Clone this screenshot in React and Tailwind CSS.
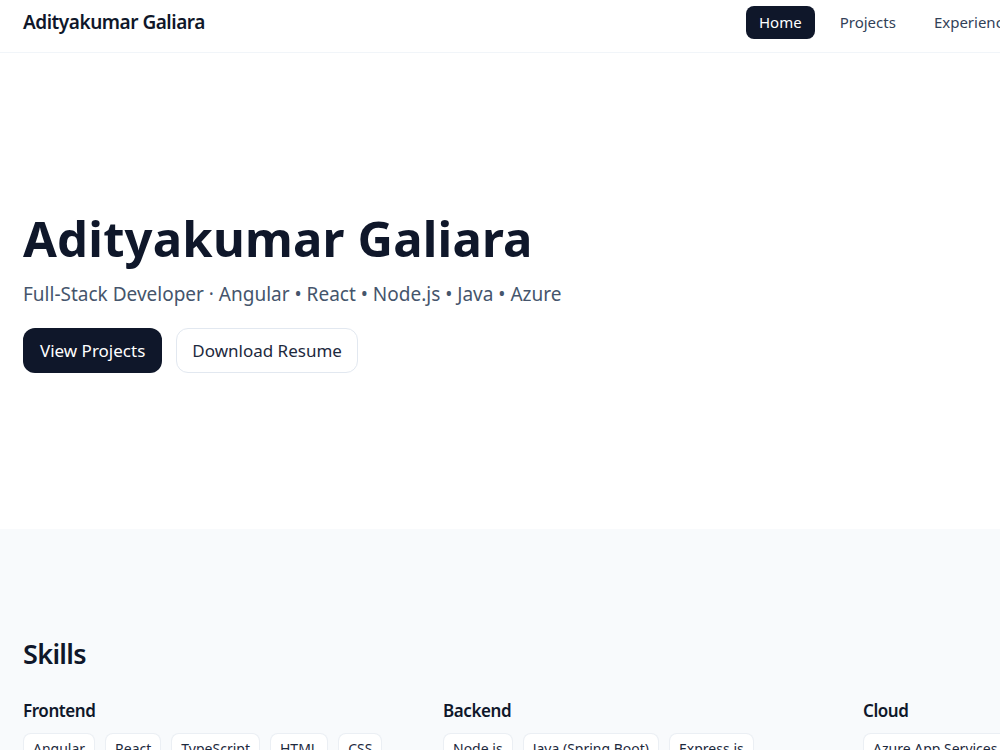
import React from 'react';

const navItems = ['Home', 'Projects', 'Experience', 'Skills', 'Contact'];

const skills = [
  { title: 'Frontend', items: ['Angular', 'React', 'TypeScript', 'HTML', 'CSS', 'Tailwind CSS'] },
  { title: 'Backend', items: ['Node.js', 'Java (Spring Boot)', 'Express.js', 'REST APIs'] },
  { title: 'Cloud', items: ['Azure App Services', 'Azure Functions', 'Docker'] },
];

export default function App() {
  return (
    <div className="w-[1280px] bg-white text-[#0f172a]" style={{ fontFamily: '"Noto Sans", "Open Sans", sans-serif' }}>
      <header className="h-[53px] border-b border-slate-100 bg-white">
        <div className="flex h-[44px] items-center px-[23px]">
          <div className="text-[19px] font-semibold tracking-tight">Adityakumar Galiara</div>
          <nav className="ml-auto flex w-[511px] items-center gap-[12px]">
            {navItems.map((item, i) => (
              <a
                key={item}
                className={
                  i === 0
                    ? 'rounded-lg bg-[#0f172a] px-[13px] py-[6px] text-[15px] leading-[21px] text-white'
                    : 'rounded-lg px-[13px] py-[6px] text-[15px] leading-[21px] text-slate-700'
                }
              >
                {item}
              </a>
            ))}
          </nav>
        </div>
      </header>

      <section className="flex h-[476px] items-center px-[23px]">
        <div>
          <h1 className="text-[49px] font-bold leading-[1.2] tracking-[0.2px]">Adityakumar Galiara</h1>
          <p className="mt-[12px] text-[19px] text-slate-600">
            Full-Stack Developer · Angular • React • Node.js • Java • Azure
          </p>
          <div className="mt-5 flex gap-3.5">
            <button className="h-[45px] rounded-xl bg-[#0f172a] px-[17px] text-[17px] text-white">View Projects</button>
            <button className="h-[45px] rounded-xl border border-slate-200 bg-white px-[15px] text-[17px] text-slate-800">
              Download Resume
            </button>
          </div>
        </div>
      </section>

      <section className="min-h-[300px] bg-slate-50 px-[23px] pt-[107px] pb-24">
        <h2 className="text-[27px] font-semibold leading-9 tracking-tight">Skills</h2>
        <div className="mt-[25px] grid grid-cols-3 gap-[26px]">
          {skills.map((group) => (
            <div key={group.title}>
              <h3 className="text-[17px] font-semibold leading-7 tracking-tight">{group.title}</h3>
              <div className="mt-2 flex flex-wrap gap-2.5">
                {group.items.map((s) => (
                  <span key={s} className="rounded-lg border border-slate-200/70 bg-white px-[9px] py-1 text-[14px] text-slate-800">
                    {s}
                  </span>
                ))}
              </div>
            </div>
          ))}
        </div>
      </section>
    </div>
  );
}
